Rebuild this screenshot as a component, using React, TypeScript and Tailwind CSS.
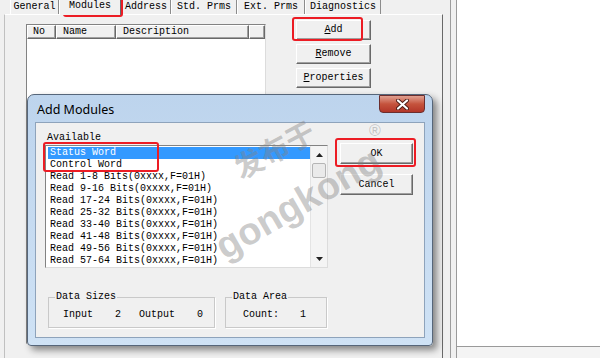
import React from 'react';

const mono = "font-['Liberation_Mono',monospace] text-[10px] leading-[12px] text-black";

const tabs = [
  { label: 'General', cls: 'w-[49px]' },
  { label: 'Modules', cls: 'w-[62px]', active: true },
  { label: 'Address', cls: 'w-[50px]' },
  { label: 'Std. Prms', cls: 'w-[66px]' },
  { label: 'Ext. Prms', cls: 'w-[68px]' },
  { label: 'Diagnostics', cls: 'w-[76px]' },
];

const items = [
  'Status Word',
  'Control Word',
  'Read 1-8 Bits(0xxxx,F=01H)',
  'Read 9-16 Bits(0xxxx,F=01H)',
  'Read 17-24 Bits(0xxxx,F=01H)',
  'Read 25-32 Bits(0xxxx,F=01H)',
  'Read 33-40 Bits(0xxxx,F=01H)',
  'Read 41-48 Bits(0xxxx,F=01H)',
  'Read 49-56 Bits(0xxxx,F=01H)',
  'Read 57-64 Bits(0xxxx,F=01H)',
];

const raised =
  'border border-t-white border-l-white border-r-[#696969] border-b-[#696969] shadow-[inset_-1px_-1px_0_#a0a0a0] bg-[#f0f0f0]';

const WinButton: React.FC<{ label: string; underline?: number; className?: string }> = ({
  label,
  underline,
  className = '',
}) => (
  <div className={`${raised} ${mono} flex items-center justify-center ${className}`}>
    {underline === undefined ? (
      label
    ) : (
      <span>
        {label.slice(0, underline)}
        <span className="underline underline-offset-1">{label[underline]}</span>
        {label.slice(underline + 1)}
      </span>
    )}
  </div>
);

const RedBox: React.FC<{ className: string }> = ({ className }) => (
  <div className={`absolute border-2 border-[#ec1c24] rounded-[3px] pointer-events-none ${className}`} />
);

const GroupBox: React.FC<{ title: string; className: string; children: React.ReactNode }> = ({
  title,
  className,
  children,
}) => (
  <div className={`relative h-[31px] border border-[#c9c9c9] shadow-[1px_1px_0_white] ${className}`}>
    <span className={`${mono} absolute left-[6px] -top-[7px] bg-[#f0f0f0] px-px`}>{title}</span>
    <div className={`${mono} flex items-center h-full pt-[5px]`}>{children}</div>
  </div>
);

const ScrollBar: React.FC = () => (
  <div className="w-[17px] h-full flex flex-col border-l border-[#e4e4e4] bg-[#f4f4f4]">
    <div className="h-[17px] flex items-center justify-center">
      <svg width="7" height="4" viewBox="0 0 7 4">
        <path d="M3.5 0 L7 4 L0 4 Z" fill="#222" />
      </svg>
    </div>
    <div className="h-[15px] mx-px border border-[#b5b5b5] bg-[#eaeaea] rounded-[2px]" />
    <div className="flex-1" />
    <div className="h-[17px] flex items-center justify-center">
      <svg width="7" height="4" viewBox="0 0 7 4">
        <path d="M0 0 L7 0 L3.5 4 Z" fill="#222" />
      </svg>
    </div>
  </div>
);

const AddModulesDialog: React.FC = () => (
  <div className="absolute left-[27px] top-[94px] w-[406px] h-[252px] rounded-t-[7px] rounded-b-[4px] border border-[#56667a] bg-gradient-to-b from-[#bdd4ed] via-[#c6dbf1] to-[#cfe2f5] shadow-[4px_4px_7px_rgba(0,0,0,0.45)] flex flex-col px-[7px] pb-[7px]">
    <div className="h-[27px] flex justify-between items-start">
      <span className="font-['Noto_Sans',sans-serif] text-[12.5px] leading-none mt-[9px] ml-[2px] text-black">
        Add Modules
      </span>
      <div className="w-[46px] h-[18px] rounded-b-[4px] border border-[#6b2e2e] bg-gradient-to-b from-[#e0a091] via-[#c5533d] to-[#b23528] flex items-center justify-center">
        <svg width="13" height="11" viewBox="0 0 13 11">
          <path d="M2 1.5 L11 9.5 M11 1.5 L2 9.5" stroke="#4a1a14" strokeWidth="4" strokeLinecap="round" />
          <path d="M2 1.5 L11 9.5 M11 1.5 L2 9.5" stroke="#ffffff" strokeWidth="2.2" strokeLinecap="round" />
        </svg>
      </div>
    </div>
    <div className="flex-1 bg-[#f0f0f0] border border-[#8ea3bb] pl-[9px] pt-[9px] flex flex-col">
      <div className="flex">
        <div className="flex flex-col">
          <span className={`${mono} ml-[2px]`}>Available</span>
          <div className="mt-px w-[283px] h-[123px] bg-white border border-t-[#828282] border-l-[#828282] border-r-[#dcdcdc] border-b-[#dcdcdc] flex">
            <div className="flex-1 pt-px pl-[2px]">
              {items.map((t, i) => (
                <div
                  key={t}
                  className={`${mono} h-[12px] pl-[2px] whitespace-nowrap ${
                    i === 0 ? 'bg-[#3399ff] text-white' : ''
                  }`}
                >
                  {t}
                </div>
              ))}
            </div>
            <ScrollBar />
          </div>
        </div>
        <div className="ml-[12px] mt-[11px] flex flex-col gap-[10px]">
          <WinButton label="OK" className="w-[73px] h-[21px]" />
          <WinButton label="Cancel" className="w-[73px] h-[21px]" />
        </div>
      </div>
      <div className="flex gap-[10px] ml-[3px] mt-[29px]">
        <GroupBox title="Data Sizes" className="w-[167px]">
          <span className="ml-[14px]">Input</span>
          <span className="ml-[22px]">2</span>
          <span className="ml-[18px]">Output</span>
          <span className="ml-[22px]">0</span>
        </GroupBox>
        <GroupBox title="Data Area" className="w-[102px]">
          <span className="ml-[17px]">Count:</span>
          <span className="ml-[21px]">1</span>
        </GroupBox>
      </div>
    </div>
  </div>
);

const Watermark: React.FC = () => (
  <div className="absolute inset-0 pointer-events-none">
    <span className="absolute left-[230px] top-[134px] -rotate-[28deg] font-['Noto_Sans_CJK_SC',sans-serif] font-bold text-[29px] leading-none text-[rgba(130,130,130,0.42)]">
      发布于
    </span>
    <span className="absolute left-[206px] top-[184px] -rotate-[30deg] font-['Liberation_Sans',Arial,sans-serif] font-bold text-[38px] leading-none text-[rgba(130,130,130,0.42)]">
      gongkong
    </span>
    <span className="absolute left-[369px] top-[123px] font-['Liberation_Sans',Arial,sans-serif] text-[16px] leading-none text-[rgba(130,130,130,0.42)]">
      ®
    </span>
  </div>
);

export default function App() {
  return (
    <div className="relative w-[600px] h-[358px] overflow-hidden bg-[#f0f0f0] flex">
      <div className="w-[443px] flex flex-col">
        <div className="h-[14px] flex items-end pl-[10px]">
          {tabs.map((t) =>
            t.active ? (
              <div
                key={t.label}
                className={`${t.cls} h-[15px] -mb-px relative z-10 bg-[#f0f0f0] border-l border-white border-r border-r-[#696969] ${mono} flex justify-center`}
              >
                {t.label}
              </div>
            ) : (
              <div
                key={t.label}
                className={`${t.cls} h-[14px] border-l border-white border-r border-r-[#8c8c8c] ${mono} flex justify-center pt-px`}
              >
                {t.label}
              </div>
            )
          )}
        </div>
        <div className="flex-1 ml-[4px] border-l border-t border-l-[#c0c0c0] border-t-white border-r border-r-[#696969] flex items-start pl-[21px] pt-[5px]">
          <div className="mt-[4px] w-[240px] h-[320px] bg-white border border-t-[#828282] border-l-[#828282] border-r-[#dcdcdc] border-b-[#dcdcdc]">
            <div className={`flex h-[14px] ${mono}`}>
              <div className={`${raised} w-[29px] pl-[5px]`}>No</div>
              <div className={`${raised} w-[60px] pl-[6px]`}>Name</div>
              <div className={`${raised} w-[133px] pl-[6px]`}>Description</div>
              <div className={`${raised} flex-1`} />
            </div>
          </div>
          <div className="ml-[30px] flex flex-col gap-[4px]">
            <WinButton label="Add" underline={0} className="w-[75px] h-[20px]" />
            <WinButton label="Remove" underline={0} className="w-[75px] h-[20px]" />
            <WinButton label="Properties" underline={0} className="w-[75px] h-[20px]" />
          </div>
        </div>
      </div>
      <div className="w-[14px] border-r border-[#9a9a9a] flex">
        <div className="ml-[7px] w-px h-full bg-[#9c9c9c]" />
      </div>
      <div className="flex-1 flex flex-col">
        <div className="flex-1 bg-white border-b border-[#9a9a9a]" />
        <div className="h-[11px] bg-[#f4f4f4]" />
      </div>

      <AddModulesDialog />
      <Watermark />

      <RedBox className="left-[63px] -top-[3px] w-[60px] h-[20px]" />
      <RedBox className="left-[292px] top-[17px] w-[71px] h-[24px]" />
      <RedBox className="left-[43px] top-[142px] w-[116px] h-[30px]" />
      <RedBox className="left-[335px] top-[138px] w-[81px] h-[29px]" />
    </div>
  );
}
